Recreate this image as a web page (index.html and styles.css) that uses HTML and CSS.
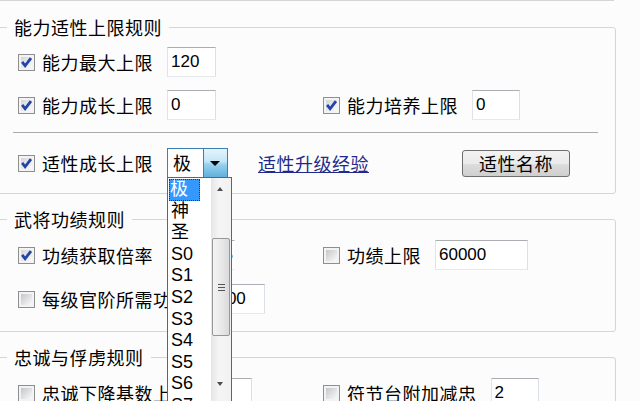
FILE: index.html
```html
<!DOCTYPE html>
<html lang="zh-CN">
<head>
  <meta charset="UTF-8" />
  <title>规则设置</title>
  <link rel="stylesheet" href="styles.css">
</head>
<body>
  <div class="prev-group"></div>

  <fieldset class="group g1">
    <legend>能力适性上限规则</legend>
    <div class="fields">
      <div class="field"><span class="cb on"></span><span class="name">能力最大上限</span><span class="box" style="width:49px">120</span></div>
      <div></div>
      <div class="field"><span class="cb on"></span><span class="name">能力成长上限</span><span class="box" style="width:49px">0</span></div>
      <div class="field"><span class="cb on"></span><span class="name">能力培养上限</span><span class="box" style="width:48px">0</span></div>
    </div>
    <hr class="sep">
    <div class="field">
      <span class="cb on"></span><span class="name">适性成长上限</span>
      <div class="combo">
        <span class="combo-val">极</span>
        <span class="combo-btn"></span>
        <div class="drop">
          <ul class="opts">
            <li class="sel">极</li>
            <li>神</li>
            <li>圣</li>
            <li>S0</li>
            <li>S1</li>
            <li>S2</li>
            <li>S3</li>
            <li>S4</li>
            <li>S5</li>
            <li>S6</li>
            <li>S7</li>
          </ul>
          <div class="sb">
            <span class="arr up"></span>
            <span class="thumb"><span class="grip"></span></span>
            <span class="arr down"></span>
          </div>
        </div>
      </div>
      <a class="link" href="#">适性升级经验</a>
      <button class="btn">适性名称</button>
    </div>
  </fieldset>

  <fieldset class="group g2">
    <legend>武将功绩规则</legend>
    <div class="fields">
      <div class="field"><span class="cb on"></span><span class="name">功绩获取倍率</span><span class="box box-right" style="width:68px">1.5</span></div>
      <div class="field"><span class="cb"></span><span class="name">功绩上限</span><span class="box" style="width:93px">60000</span></div>
      <div class="field"><span class="cb"></span><span class="name">每级官阶所需功绩</span><span class="box" style="width:61px">1000</span></div>
      <div></div>
    </div>
  </fieldset>

  <fieldset class="group g3">
    <legend>忠诚与俘虏规则</legend>
    <div class="fields">
      <div class="field"><span class="cb"></span><span class="name">忠诚下降基数上限</span><span class="box" style="width:48px">10</span></div>
      <div class="field"><span class="cb"></span><span class="name">符节台附加减忠</span><span class="box" style="width:48px">2</span></div>
    </div>
  </fieldset>
</body>
</html>
```

FILE: styles.css
```css
body {
  margin: 0;
  background: #fcfcfc;
  font-family: "Noto Sans CJK SC", "Liberation Sans", sans-serif;
  font-size: 18px;
  color: #000;
  overflow: hidden;
}

.prev-group {
  width: 618px;
  margin-left: -4px;
  height: 0;
  border-bottom: 1px solid #d3d6d9;
}

.group {
  box-sizing: border-box;
  width: 620px;
  min-width: 0;
  margin: 15px 0 0 -4px;
  border: 1px solid #d3d6d9;
  border-radius: 3px;
  padding: 11px 17px 17px 16px;
}

.g1 {
  margin-top: 16px;
  padding-top: 10px;
  padding-bottom: 15px;
}

.group legend {
  margin-left: -6px;
  padding: 0 7px;
  line-height: 20px;
  letter-spacing: .5px;
}

.fields {
  display: grid;
  grid-template-columns: 305px 1fr;
  row-gap: 14px;
}

.g1 .fields {
  row-gap: 13px;
}

.field {
  display: flex;
  align-items: center;
  height: 30px;
}

/* checkbox */
.cb {
  flex: none;
  box-sizing: border-box;
  width: 17px;
  height: 17px;
  margin-left: 5px;
  padding: 2px;
  border: 1px solid #8f8f8f;
  background: linear-gradient(135deg, #c4c6c9, #fafafa) content-box, #f3f3f3;
}

.cb.on {
  background:
    url("data:image/svg+xml,%3Csvg xmlns='http://www.w3.org/2000/svg' viewBox='0 0 14 14'%3E%3Cpath d='M2.3 6.3l3.2 4.2L11.8 2.2' fill='none' stroke='%232443a8' stroke-width='3'/%3E%3C/svg%3E") center/13px 13px no-repeat,
    linear-gradient(135deg, #d3d6da, #fafafa) content-box, #f3f3f3;
}

.name {
  margin-left: 7px;
  letter-spacing: .5px;
  line-height: 20px;
  white-space: nowrap;
}

.box {
  flex: none;
  box-sizing: border-box;
  height: 30px;
  margin-left: 14px;
  padding-left: 3px;
  border: 1px solid;
  border-color: #abadb3 #dbdfe6 #e3e9ef #e2e3ea;
  background: #fff;
  font: 17px/28px "Liberation Sans", sans-serif;
}

.box-right {
  text-align: right;
  padding-right: 1px;
  border-right-color: transparent;
}

.sep {
  margin: 12px 0 15px;
  border: 0;
  border-top: 1px solid #a9abad;
}

/* combobox */
.combo {
  position: relative;
  display: flex;
  box-sizing: border-box;
  width: 61px;
  height: 30px;
  margin-left: 14px;
  border: 1px solid #3c7fb1;
  background: #fff;
}

.combo-val {
  flex: 1;
  padding-left: 5px;
  line-height: 27px;
}

.combo-btn {
  position: relative;
  width: 23px;
  border-left: 1px solid #3c7fb1;
  background: linear-gradient(#e5f4fc, #c4e5f6 45%, #98d1ef 55%, #5fb0dc);
}

.combo-btn::after {
  content: "";
  position: absolute;
  left: 6px;
  top: 12px;
  border: 5px solid transparent;
  border-top: 5px solid #000;
}

.drop {
  position: absolute;
  left: -1px;
  top: 100%;
  z-index: 2;
  display: flex;
  box-sizing: border-box;
  width: 65px;
  height: 240px;
  border: 1px solid #646464;
  background: #fff;
}

.opts {
  flex: 1;
  margin: 0;
  padding: 1px 0 0 1px;
  list-style: none;
  font: 18px/21.6px "Liberation Sans", "Noto Sans CJK SC", sans-serif;
  color: #000;
}

.opts li {
  padding-left: 2px;
  height: 21.6px;
}

.opts .sel {
  box-sizing: border-box;
  width: 31px;
  padding-left: 1px;
  background: #3399ff;
  color: #fff;
  outline: 1px dotted #333;
  outline-offset: -1px;
}

.sb {
  display: flex;
  flex-direction: column;
  width: 20px;
  background: linear-gradient(90deg, #e6e6e6, #f5f5f5 40%, #f1f1f1);
}

.arr {
  position: relative;
  height: 24px;
}

.arr::after {
  content: "";
  position: absolute;
  left: 6px;
  top: 10px;
  border: 3.5px solid transparent;
}

.arr.up::after {
  border-bottom: 4px solid #4d4d4d;
  top: 6px;
}

.arr.down::after {
  border-top: 4px solid #4d4d4d;
  top: 11px;
}

.thumb {
  position: relative;
  box-sizing: border-box;
  height: 98px;
  margin: 36px 1px 35px;
  border: 1px solid #979797;
  border-radius: 2px;
  background: linear-gradient(90deg, #f4f4f4, #e9e9ea 50%, #d9dadc);
}

.grip {
  position: absolute;
  left: 5px;
  top: 45px;
  width: 7px;
  height: 7px;
  background: linear-gradient(#555 0 1px, transparent 1px 3px, #555 3px 4px, transparent 4px 6px, #555 6px 7px);
}

.link {
  margin-left: 30px;
  color: #1f2a8a;
  letter-spacing: .5px;
  line-height: 20px;
}

.btn {
  box-sizing: border-box;
  width: 108px;
  height: 27px;
  margin-left: 93px;
  padding: 0;
  border: 1px solid #707070;
  border-radius: 3px;
  background: linear-gradient(#f2f2f2, #ebebeb 50%, #dddddd 51%, #cfcfcf);
  font: 18px/24px "Noto Sans CJK SC", sans-serif;
  letter-spacing: .5px;
  color: #000;
}
```
